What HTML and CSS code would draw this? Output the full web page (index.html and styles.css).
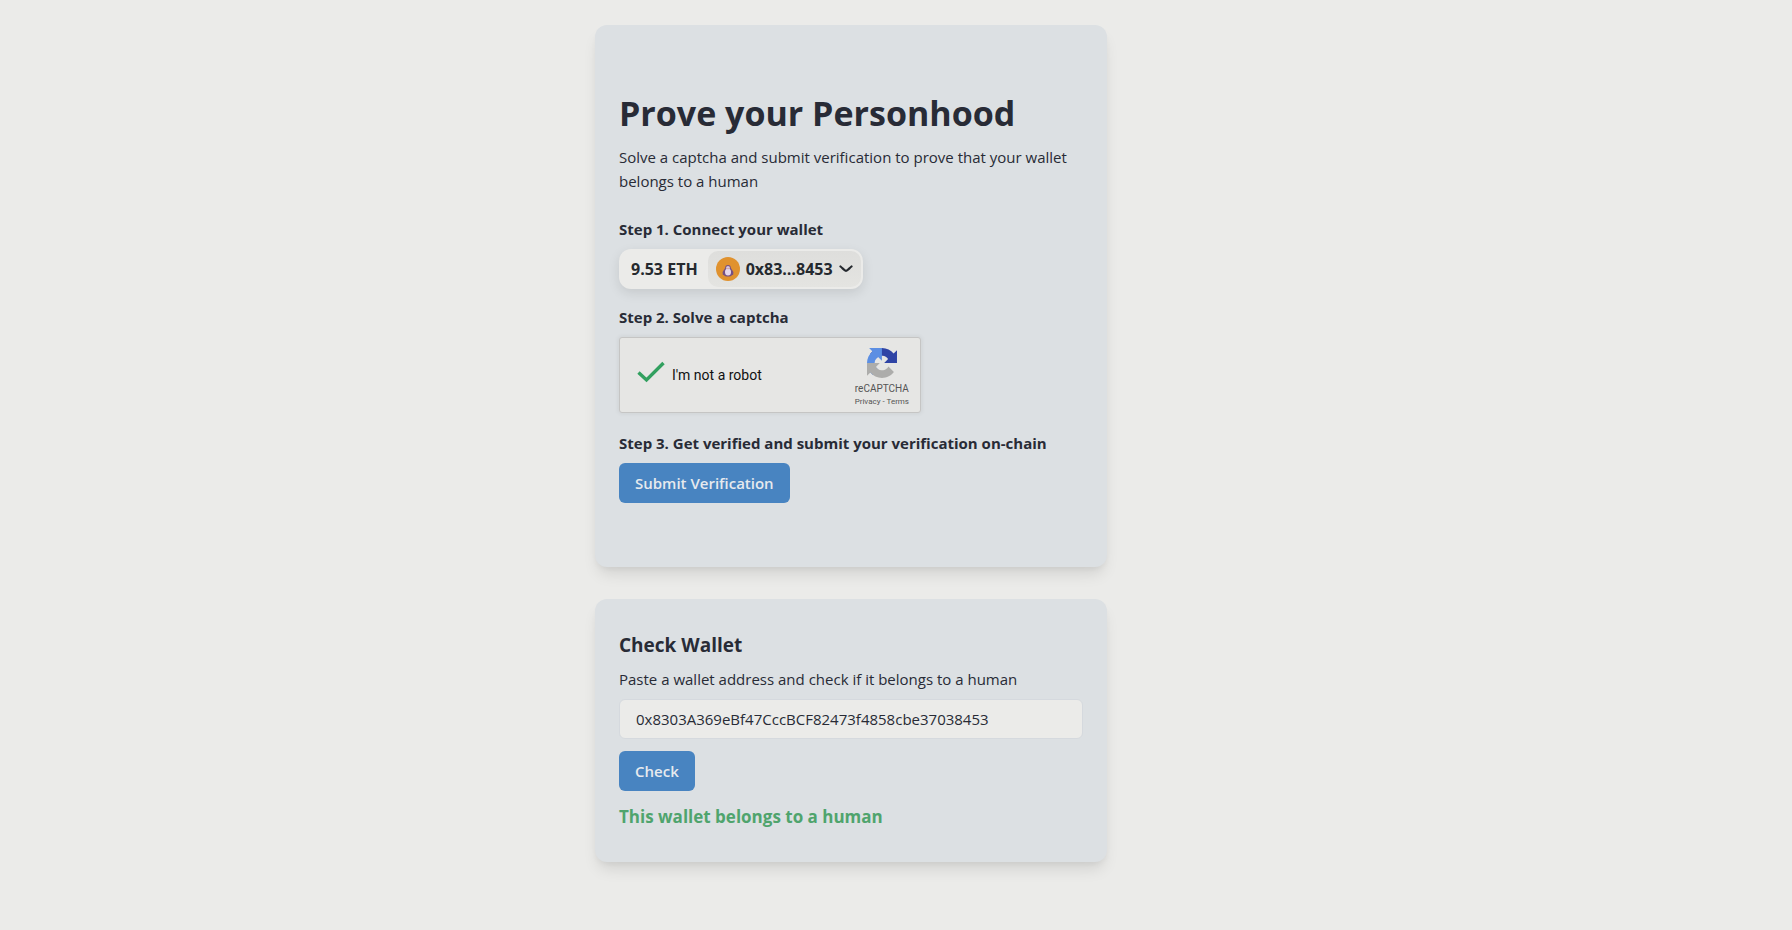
FILE: index.html
```html
<!DOCTYPE html>
<html lang="en">
<head>
<meta charset="utf-8">
<title>Prove your Personhood</title>
<link rel="stylesheet" href="styles.css">
</head>
<body>
<main class="page">
  <section class="card card-tall">
    <h1 class="title">Prove your Personhood</h1>
    <p class="text">Solve a captcha and submit verification to prove that your wallet belongs to a human</p>
    <div class="step step-first">
      <h2 class="step-label">Step 1. Connect your wallet</h2>
      <div class="wallet">
        <span class="balance">9.53 ETH</span>
        <button class="account" type="button">
          <svg class="avatar" viewBox="0 0 24 24" aria-hidden="true">
            <circle cx="12" cy="12" r="12" fill="#e0922f"/>
            <path d="M12 8c-2 0-2.800 1.300-2.900 3.100L6.600 15l.2 2.800 1.400.4c.6 1.100 2 1.300 3.800 1.300s3.200-.2 3.800-1.300l1.400-.4.2-2.800-2.500-3.900C14.800 9.300 14 8 12 8z" fill="#765083"/>
            <ellipse cx="12" cy="15" rx="3" ry="3.600" fill="#e6d8ed"/>
            <circle cx="12" cy="10.800" r="1.900" fill="#d9c5df"/>
            <path d="M11.200 11h1.600l-.8 1.100z" fill="#e0922f"/>
          </svg>
          <span>0x83…8453</span>
          <svg class="chevron" viewBox="0 0 14 8" aria-hidden="true"><path d="M1.500 1.500 C4 3.500 5.500 5.800 7 5.800 S10 3.500 12.500 1.500" fill="none" stroke="#25292e" stroke-width="2.200" stroke-linecap="round"/></svg>
        </button>
      </div>
    </div>
    <div class="step">
      <h2 class="step-label">Step 2. Solve a captcha</h2>
      <div class="captcha">
        <svg class="tick" viewBox="0 0 28 22" aria-hidden="true"><path d="M1.500 11.500 9.500 19 26.500 2" fill="none" stroke="#32a05f" stroke-width="3.400"/></svg>
        <span class="robot">I'm not a robot</span>
        <div class="brand">
          <svg class="logo" viewBox="0 0 64 64" aria-hidden="true">
            <path d="M64 31.955l-.033-1.370V4.687l-7.160 7.160C50.948 4.674 42.033.093 32.050.093c-10.400 0-19.622 4.960-25.458 12.640l11.736 11.860a15.550 15.550 0 0 1 4.754-5.334c2.050-1.600 4.952-2.906 8.968-2.906.485 0 .860.057 1.135.163 4.976.393 9.288 3.140 11.828 7.124l-8.307 8.307z" fill="#2f44a5"/>
            <path d="M31.862.094l-1.370.033H4.594l7.160 7.160C4.580 13.147 0 22.060 0 32.046c0 10.400 4.960 19.622 12.640 25.458L24.500 45.768a15.550 15.550 0 0 1-5.334-4.754c-1.600-2.050-2.906-4.952-2.906-8.968 0-.485.057-.860.163-1.135.393-4.976 3.140-9.288 7.124-11.828l8.307 8.307z" fill="#5c8fe3"/>
            <path d="M0 32.045l.033 1.370v25.898l7.160-7.160c5.860 7.173 14.774 11.754 24.760 11.754 10.400 0 19.622-4.960 25.458-12.640l-11.736-11.860a15.550 15.550 0 0 1-4.754 5.334c-2.050 1.600-4.952 2.906-8.968 2.906-.485 0-.860-.057-1.135-.163-4.976-.393-9.288-3.140-11.828-7.124l8.307-8.307z" fill="#adadab"/>
          </svg>
          <span class="brand-name">reCAPTCHA</span>
          <span class="legal"><a href="#">Privacy</a> - <a href="#">Terms</a></span>
        </div>
      </div>
    </div>
    <div class="step">
      <h2 class="step-label">Step 3. Get verified and submit your verification on-chain</h2>
      <button class="button" type="button">Submit Verification</button>
    </div>
  </section>
  <section class="card">
    <h2 class="subtitle">Check Wallet</h2>
    <form class="check">
      <label class="text" for="address">Paste a wallet address and check if it belongs to a human</label>
      <input class="input" id="address" type="text" value="0x8303A369eBf47CccBCF82473f4858cbe37038453">
      <button class="button" type="button">Check</button>
      <output class="result" for="address">This wallet belongs to a human</output>
    </form>
  </section>
</main>
</body>
</html>
```
FILE: styles.css
```css
* { box-sizing: border-box; }
body {
  margin: 0;
  background: #ebebe9;
  color: #282b36;
  font-family: "Segoe UI", "Open Sans", sans-serif;
  font-size: 15px;
  line-height: 24px;
}
h1, h2, p { margin: 0; }
button, input { font: inherit; color: inherit; }
.page {
  display: flex;
  flex-direction: column;
  align-items: center;
  gap: 32px;
  padding: 25px 90px 32px 0;
}
.card {
  width: 100%;
  max-width: 512px;
  padding: 32px 24px;
  border-radius: 12px;
  background: #dce0e3;
  box-shadow: 0 10px 15px -3px rgba(0, 0, 0, 0.1), 0 4px 6px -2px rgba(0, 0, 0, 0.05);
}
.card-tall { padding: 64px 24px; }
.title {
  margin-bottom: 8px;
  font-size: 34px;
  line-height: 48px;
  font-weight: 700;
}
.step {
  display: flex;
  flex-direction: column;
  align-items: flex-start;
  gap: 8px;
  margin-top: 16px;
}
.step-first { margin-top: 24px; }
.step-label { font-size: 15px; line-height: 24px; font-weight: 700; }
.wallet {
  display: flex;
  align-items: center;
  height: 40px;
  padding: 2px;
  border-radius: 12px;
  background: #ebebe9;
  box-shadow: 0 4px 12px rgba(0, 0, 0, 0.1);
  color: #25292e;
  font-size: 16px;
  font-weight: 700;
}
.balance { padding: 0 10px; }
.account {
  display: flex;
  align-items: center;
  gap: 6px;
  height: 36px;
  padding: 0 8px;
  border: 0;
  border-radius: 10px;
  background: linear-gradient(#dededc, #e4e4e1);
}
.avatar { width: 24px; height: 24px; }
.chevron { width: 14px; height: 8px; }
.captcha {
  display: flex;
  align-items: center;
  width: 302px;
  max-width: 100%;
  height: 76px;
  margin-bottom: 2px;
  padding: 0 11px 0 17px;
  border: 1px solid #c5c5c4;
  border-radius: 3px;
  background: #e6e6e4;
  box-shadow: 0 0 4px 1px rgba(0, 0, 0, 0.06);
  font-family: Roboto, sans-serif;
}
.tick { width: 28px; height: 22px; margin-bottom: 6px; }
.robot { margin-left: 7px; color: #111; font-size: 14px; }
.brand {
  display: flex;
  flex-direction: column;
  align-items: center;
  margin-left: auto;
  padding-top: 4px;
  color: #555;
}
.logo { width: 30px; height: 30px; margin-bottom: 4px; }
.brand-name { font-size: 10px; line-height: 14px; }
.legal { font-size: 8px; line-height: 11px; }
.legal a { color: inherit; text-decoration: none; }
.button {
  height: 40px;
  padding: 0 16px;
  border: 0;
  border-radius: 6px;
  background: #4884c1;
  color: #e6eaee;
  font-weight: 600;
}
.subtitle { margin-bottom: 8px; font-size: 19px; line-height: 28px; font-weight: 700; }
.check { display: flex; flex-direction: column; align-items: flex-start; gap: 12px; }
.input {
  width: 100%;
  height: 40px;
  margin-top: -4px;
  padding: 0 16px;
  border: 1px solid #d5d9de;
  border-radius: 6px;
  background: #ebebe9;
}
.result { color: #4fa46d; font-size: 17px; line-height: 27px; font-weight: 700; }
```
